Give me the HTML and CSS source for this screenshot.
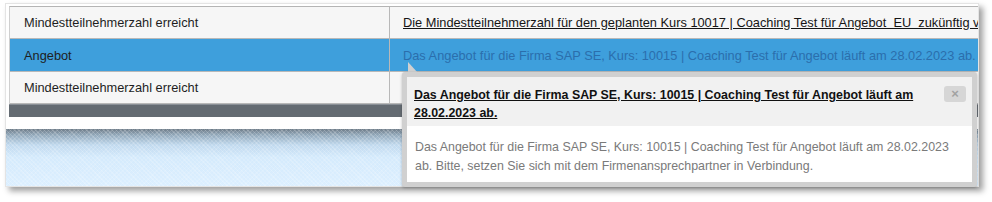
FILE: index.html
```html
<!DOCTYPE html>
<html lang="de">
<head>
<meta charset="utf-8">
<title>Benachrichtigungen</title>
<link rel="stylesheet" href="styles.css">
</head>
<body>
<div class="frame">
  <div class="table">
    <div class="row">
      <div class="cell c1">Mindestteilnehmerzahl erreicht</div>
      <div class="cell c2"><a class="link" href="#">Die Mindestteilnehmerzahl für den geplanten Kurs 10017 | Coaching Test für Angebot&nbsp; EU&nbsp; zukünftig vollständig belegt.</a></div>
    </div>
    <div class="row selected">
      <div class="cell c1">Angebot</div>
      <div class="cell c2"><span class="sel-text">Das Angebot für die Firma SAP SE, Kurs: 10015 | Coaching Test für Angebot läuft am 28.02.2023 ab.</span></div>
    </div>
    <div class="row">
      <div class="cell c1">Mindestteilnehmerzahl erreicht</div>
      <div class="cell c2"></div>
    </div>
  </div>
  <div class="footer-bar"></div>
  <div class="spacer"></div>
  <div class="band"></div>
</div>

<div class="caret"></div>
<div class="popup">
  <div class="popup-title"><a class="title-link" href="#">Das Angebot für die Firma SAP SE, Kurs: 10015 | Coaching Test für Angebot läuft am 28.02.2023 ab.</a></div>
  <div class="popup-body">Das Angebot für die Firma SAP SE, Kurs: 10015 | Coaching Test für Angebot läuft am 28.02.2023 ab. Bitte, setzen Sie sich mit dem Firmenansprechpartner in Verbindung.</div>
  <button class="close" type="button">×</button>
</div>
</body>
</html>
```

FILE: styles.css
```css
html, body {
  margin: 0;
  padding: 0;
  background: #ffffff;
  font-family: "Liberation Sans", Arial, Helvetica, sans-serif;
}

body {
  width: 992px;
  height: 202px;
  overflow: hidden;
  position: relative;
}

.frame {
  margin: 3px 0 0 5px;
  width: 974px;
  height: 184px;
  box-sizing: border-box;
  border: 1px solid #e4e4e4;
  padding: 2px 0 0 3px;
  background: #ffffff;
  box-shadow: 4px 4px 6px rgba(0, 0, 0, 0.38);
  overflow: hidden;
  display: flex;
  flex-direction: column;
}

.table {
  border-top: 1px solid #b4b4b4;
  border-left: 1px solid #cfcfcf;
  display: flex;
  flex-direction: column;
}

.row {
  display: grid;
  grid-template-columns: 380px 1fr;
  height: 32px;
  box-sizing: border-box;
  border-bottom: 1px solid #b8b8b8;
  background: #f6f6f6;
}

.row.selected {
  background: #3e9fdc;
  height: 33px;
}

.cell {
  display: flex;
  align-items: center;
  white-space: nowrap;
  overflow: hidden;
  font-size: 12.8px;
  color: #1e1e1e;
}

.c1 {
  padding-left: 14px;
  border-right: 1px solid #b8b8b8;
}

.c2 {
  padding-left: 13px;
}

.link {
  color: #151515;
  text-decoration: underline;
}

.sel-text {
  color: #2b6eac;
}

.footer-bar {
  height: 12px;
  background: #646b72;
  border-top: 1px solid #8a9097;
}

.spacer {
  height: 12px;
  background: #ffffff;
}

.band {
  flex: 1;
  margin-left: -3px;
  background:
    repeating-linear-gradient(45deg, rgba(255, 255, 255, 0.18) 0 1px, transparent 1px 3px),
    repeating-linear-gradient(-45deg, rgba(255, 255, 255, 0.12) 0 1px, transparent 1px 3px),
    linear-gradient(to bottom, #6d7b88 0, #93a9bb 6px, #c0d9ee 16px, #d4eafc 28px, #dcefff 100%);
}

.caret {
  position: absolute;
  left: 408px;
  top: 62px;
  width: 0;
  height: 0;
  border-bottom: 11px solid #d0d0d0;
  border-right: 10px solid transparent;
}

.popup {
  position: absolute;
  left: 402px;
  top: 72px;
  width: 575px;
  height: 115px;
  box-sizing: border-box;
  border: 5px solid #d0d0d0;
  border-radius: 3px;
  background: #ffffff;
  box-shadow: 0 1px 3px rgba(0, 0, 0, 0.25);
  display: flex;
  flex-direction: column;
}

.popup-title {
  background: #f1f1f1;
  padding: 9px 42px 4px 7px;
  font-size: 12.4px;
  font-weight: bold;
  line-height: 18px;
}

.title-link {
  color: #111111;
  text-decoration: underline;
}

.popup-body {
  flex: 1;
  padding: 12px 10px 0 8px;
  font-size: 12.4px;
  line-height: 19px;
  color: #7a7a7a;
}

.close {
  position: absolute;
  top: 9px;
  right: 6px;
  width: 22px;
  height: 16px;
  padding: 0;
  border: none;
  border-radius: 3px;
  background: #d6d6d6;
  color: #a2a2a2;
  font-family: "Liberation Sans", Arial, sans-serif;
  font-size: 13px;
  font-weight: bold;
  line-height: 16px;
  text-align: center;
}
```
